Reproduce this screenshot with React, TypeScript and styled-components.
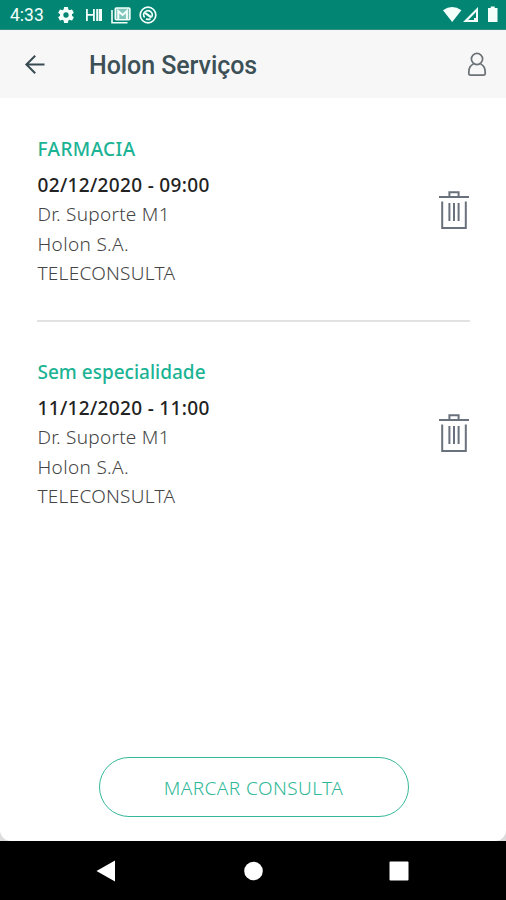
import React from "react";
import styled, { createGlobalStyle } from "styled-components";

const GlobalStyle = createGlobalStyle`
  * { box-sizing: border-box; }
  body { margin: 0; background: #000; }
`;

const Screen = styled.div`
  width: 506px;
  height: 900px;
  display: flex;
  flex-direction: column;
  overflow: hidden;
  background: #dcdcdc;
  font-family: "Noto Sans", sans-serif;
`;

const StatusBar = styled.div`
  flex: none;
  height: 30px;
  display: flex;
  align-items: center;
  justify-content: space-between;
  padding: 1px 6px 0 10px;
  background: #038573;
  border-bottom: 1px solid #2f8f80;
  color: #f4fffc;
`;

const StatusIcons = styled.div`
  display: flex;
  align-items: center;
  gap: 8px;
`;

const Clock = styled.span`
  width: 38px;
  font: 400 17.5px/28px Roboto, sans-serif;
`;

const Header = styled.header`
  flex: none;
  height: 68px;
  display: flex;
  align-items: center;
  padding: 0 19px 0 24px;
  background: #f7f7f8;
`;

const IconButton = styled.button`
  display: flex;
  padding: 0;
  border: 0;
  background: none;
  color: #394b52;
`;

const Title = styled.h1`
  flex: 1;
  margin: 4px 0 0 43px;
  font: 500 25px/32px Roboto, sans-serif;
  letter-spacing: -0.07px;
  color: #3c5056;
`;

const Content = styled.main`
  flex: none;
  height: 743px;
  display: flex;
  flex-direction: column;
  padding: 1px 36px 24px 37px;
  background: #fff;
  border-radius: 0 0 11px 11px;
`;

const Appointment = styled.article`
  height: 223px;
  display: flex;
  justify-content: space-between;
  padding-top: 35px;
  border-bottom: 2px solid #e2e2e2;

  &:last-of-type {
    border-bottom: 0;
  }
`;

const Details = styled.div`
  display: flex;
  flex-direction: column;
  padding-left: 0.5px;
  white-space: nowrap;
`;

const Specialty = styled.h2<{ $tracking: number }>`
  margin: 0 0 5.5px;
  font-size: 19px;
  font-weight: 500;
  line-height: 31px;
  letter-spacing: ${(p) => p.$tracking}px;
  color: #1bb394;
`;

const When = styled.div`
  font-size: 19px;
  font-weight: 500;
  line-height: 29.5px;
  letter-spacing: 0.33px;
  color: #222;
`;

const Line = styled.div<{ $tracking?: number }>`
  font-size: 19px;
  font-weight: 300;
  line-height: 29.5px;
  letter-spacing: ${(p) => p.$tracking ?? 0.26}px;
  color: #444;
`;

const DeleteButton = styled(IconButton)`
  align-self: flex-start;
  margin-top: 56px;
  color: #69727c;
`;

const BookButton = styled.button`
  width: 310px;
  height: 60px;
  margin: auto 0 0 61.5px;
  padding: 1px 0 0;
  border: 1.5px solid #35b899;
  border-radius: 30px;
  background: #fff;
  color: #2fb897;
  font: 300 19px/56px "Noto Sans", sans-serif;
  letter-spacing: 0.43px;
`;

const NavBar = styled.nav`
  flex: none;
  height: 59px;
  display: flex;
  align-items: center;
  justify-content: space-between;
  padding: 0 97px 0 96px;
  background: #000;
`;

const Gear = () => (
  <svg width="20" height="20" viewBox="0 0 24 24" fill="currentColor">
    <path d="M19.14 12.94c.04-.3.06-.61.06-.94s-.02-.64-.07-.94l2.03-1.58a.49.49 0 0 0 .12-.61l-1.92-3.32a.49.49 0 0 0-.59-.22l-2.39.96a7 7 0 0 0-1.62-.94l-.36-2.54a.48.48 0 0 0-.48-.41h-3.84c-.24 0-.43.17-.47.41l-.36 2.54c-.59.24-1.13.57-1.62.94l-2.39-.96a.48.48 0 0 0-.59.22L2.74 8.87a.48.48 0 0 0 .12.61l2.03 1.58c-.05.3-.09.63-.09.94s.02.64.07.94l-2.03 1.58a.49.49 0 0 0-.12.61l1.92 3.32c.12.22.37.29.59.22l2.39-.96c.5.38 1.03.7 1.62.94l.36 2.54c.05.24.24.41.48.41h3.84c.24 0 .44-.17.47-.41l.36-2.54a7 7 0 0 0 1.62-.94l2.39.96c.22.08.47 0 .59-.22l1.92-3.32a.48.48 0 0 0-.12-.61zM12 15.2a3.2 3.2 0 1 1 0-6.4 3.2 3.2 0 0 1 0 6.4z" />
  </svg>
);

const BarsMark = () => (
  <svg width="19" height="14" viewBox="-2 0 19 14" fill="currentColor">
    <path d="M0 1h1.8v5H7V1h1.8v12H7V7.700H1.800V13H0zM10.200 1H12v12h-1.800zM12.600 1h3.400v12h-3.400z" />
  </svg>
);

const MailStack = () => (
  <svg width="20" height="17" viewBox="0 0 20 17" fill="none" stroke="currentColor">
    <path d="M1 3v12.800h15.500" strokeWidth="1.600" />
    <rect x="4.300" y="1" width="14.600" height="11.800" rx="1" strokeWidth="1.600" fill="#7fc4ba" />
    <path d="M7.300 12V4l4.300 4 4.300-4v8" strokeWidth="2" />
  </svg>
);

const CircleMark = () => (
  <svg width="18" height="18" viewBox="0 0 18 18" fill="none" stroke="currentColor">
    <circle cx="9" cy="9" r="7.800" strokeWidth="1.700" />
    <path d="M5.600 11.500A4.200 4.200 0 1 1 12.500 11.200M7 12.700a4.200 4.200 0 0 0 4.500 0" strokeWidth="1.600" />
    <path d="M6 6.800l6.500 4.700" strokeWidth="2.200" />
  </svg>
);

const Signals = () => (
  <svg width="57" height="18" viewBox="0 0 57 18" fill="currentColor">
    <path d="M0 4.300Q9.200-2.400 18.400 4.300L9.200 16z" />
    <path d="M35 1v15H20zM33 12V6l-7.800 8H31v-2z" fillRule="evenodd" />
    <path d="M45 2h2.700V.5h4V2H54.500v14H45V2z" />
  </svg>
);

const BackArrow = () => (
  <svg width="22" height="20" viewBox="0 0 22 20" fill="none" stroke="currentColor" strokeWidth="2">
    <path d="M20.500 10.500H2.500M11.200 1.800L2.400 10.500l8.800 8.700" />
  </svg>
);

const Person = () => (
  <svg width="20" height="26" viewBox="0 0 20 26" fill="none" stroke="#6b7276" strokeWidth="1.700">
    <circle cx="10" cy="8" r="5.600" />
    <path d="M6.500 13C3 14.500 1.800 17.500 1.800 21v1.300c0 1.100.7 1.800 1.800 1.800h12.800c1.100 0 1.800-.7 1.800-1.800V21c0-3.500-1.200-6.500-4.700-8" />
  </svg>
);

const Trash = () => (
  <svg width="32" height="40" viewBox="0 0 32 40" fill="none" stroke="currentColor" strokeWidth="2">
    <path d="M1 7h30M11.400 7V2.300h9.200V7M4.200 11.500V38h23.600V11.500" />
    <path d="M11.400 13v18M16 13v18M20.600 13v18" />
  </svg>
);

const appointments = [
  { specialty: "FARMACIA", tracking: 0.4, when: "02/12/2020 - 09:00" },
  { specialty: "Sem especialidade", tracking: 0, when: "11/12/2020 - 11:00" },
];

export default function App() {
  return (
    <>
      <GlobalStyle />
      <Screen>
        <StatusBar>
          <StatusIcons>
            <Clock>4:33</Clock>
            <Gear />
            <BarsMark />
            <MailStack />
            <CircleMark />
          </StatusIcons>
          <Signals />
        </StatusBar>
        <Header>
          <IconButton aria-label="Voltar">
            <BackArrow />
          </IconButton>
          <Title>Holon Serviços</Title>
          <IconButton aria-label="Perfil">
            <Person />
          </IconButton>
        </Header>
        <Content>
          {appointments.map((a) => (
            <Appointment key={a.when}>
              <Details>
                <Specialty $tracking={a.tracking}>{a.specialty}</Specialty>
                <When>{a.when}</When>
                <Line>Dr. Suporte M1</Line>
                <Line $tracking={0.34}>Holon S.A.</Line>
                <Line>TELECONSULTA</Line>
              </Details>
              <DeleteButton aria-label="Excluir">
                <Trash />
              </DeleteButton>
            </Appointment>
          ))}
          <BookButton>MARCAR CONSULTA</BookButton>
        </Content>
        <NavBar>
          <svg width="20" height="22" viewBox="0 0 20 22">
            <path d="M19 .5v21L.5 11z" fill="#fff" />
          </svg>
          <svg width="20" height="20" viewBox="0 0 20 20">
            <circle cx="10.500" cy="10" r="9.300" fill="#fff" />
          </svg>
          <svg width="20" height="20" viewBox="0 0 20 20">
            <rect x=".5" y=".5" width="19" height="19" rx="1" fill="#fff" />
          </svg>
        </NavBar>
      </Screen>
    </>
  );
}
